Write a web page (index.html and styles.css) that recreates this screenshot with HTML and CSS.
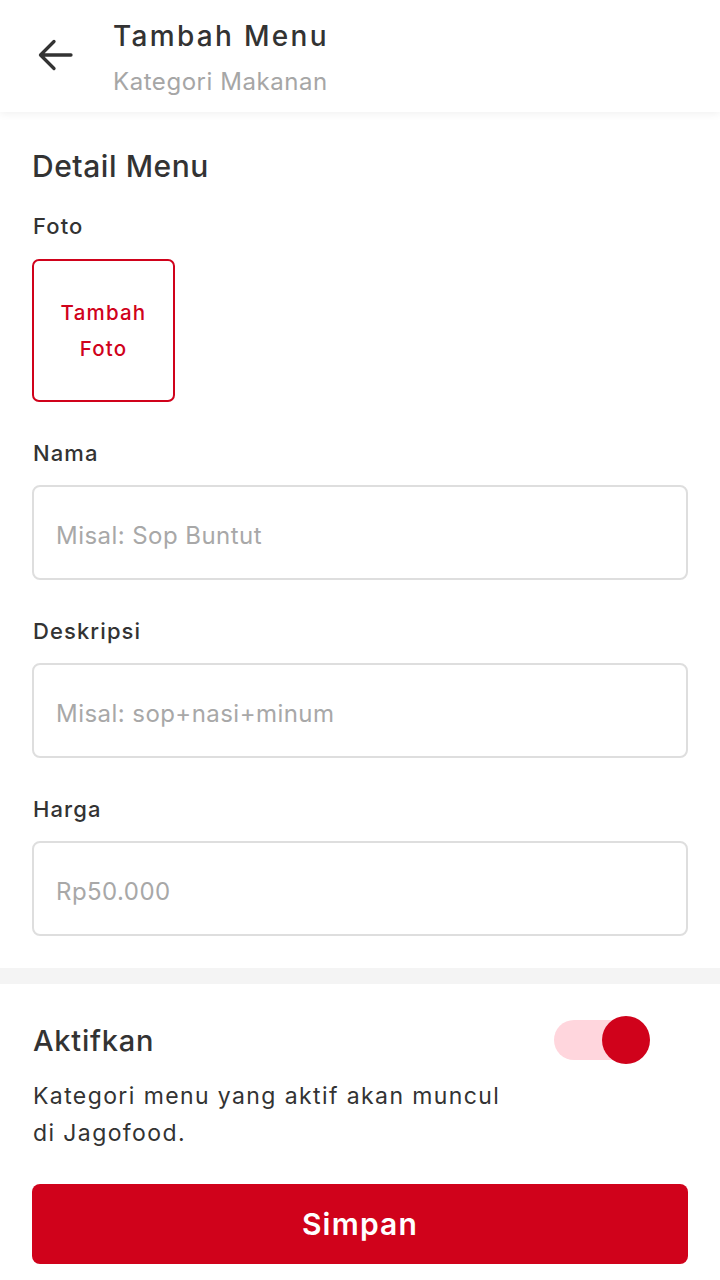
FILE: index.html
```html
<!DOCTYPE html>
<html>
<head>
<meta charset="utf-8">
<link rel="stylesheet" href="styles.css">
</head>
<body>
<div class="app">
  <header class="topbar">
    <button class="back" aria-label="Kembali">
      <svg width="36" height="34" viewBox="0 0 36 34"><path d="M33 17H3M16 3.5L2.5 17L16 30.5" fill="none" stroke="#333" stroke-width="3.3" stroke-linecap="round" stroke-linejoin="round"/></svg>
    </button>
    <div class="titles">
      <div class="title">Tambah Menu</div>
      <div class="subtitle">Kategori Makanan</div>
    </div>
  </header>

  <section class="detail">
    <h2 class="section-title">Detail Menu</h2>
    <div class="field">
      <div class="label">Foto</div>
      <div class="photo">Tambah<br>Foto</div>
    </div>
    <div class="field">
      <div class="label">Nama</div>
      <div class="input">Misal: Sop Buntut</div>
    </div>
    <div class="field">
      <div class="label">Deskripsi</div>
      <div class="input">Misal: sop+nasi+minum</div>
    </div>
    <div class="field">
      <div class="label">Harga</div>
      <div class="input">Rp50.000</div>
    </div>
  </section>

  <div class="divider"></div>

  <section class="active">
    <div class="active-row">
      <div class="active-title">Aktifkan</div>
      <div class="toggle"><div class="track"></div><div class="knob"></div></div>
    </div>
    <p class="active-desc">Kategori menu yang aktif akan muncul di Jagofood.</p>
    <button class="save">Simpan</button>
  </section>
</div>
</body>
</html>
```
FILE: styles.css
```css
* { box-sizing: border-box; }
html, body { margin: 0; padding: 0; background: #fff; }
body { font-family: Inter, "Noto Sans", sans-serif; color: #333; }
.app { width: 720px; min-height: 1280px; }

.topbar {
  height: 112px;
  display: flex;
  align-items: flex-start;
  box-shadow: 0 2px 8px rgba(0,0,0,0.06);
  position: relative;
}
.back {
  border: 0; background: none; padding: 0;
  margin: 38px 0 0 38px;
  width: 36px; height: 34px;
  display: flex;
}
.titles { margin-left: 39px; padding-top: 16px; }
.title { font-size: 28px; font-weight: 500; line-height: 40px; color: #333; letter-spacing: 2.3px; }
.subtitle { font-size: 24px; line-height: 32px; color: #a6a6a6; margin-top: 10px; letter-spacing: 0.55px; }

.detail { padding: 34px 32px 32px 32px; }
.section-title { margin: 0; font-size: 30px; font-weight: 500; line-height: 40px; color: #333; letter-spacing: 0.55px; }
.field { margin-top: 25px; }
.field + .field { margin-top: 36px; }
.label { font-size: 22px; font-weight: 500; line-height: 30px; color: #333; margin-left: 1px; letter-spacing: 1.1px; }
.photo {
  margin-top: 18px;
  width: 143px; height: 143px;
  border: 2px solid #d0021b;
  border-radius: 7px;
  display: flex; align-items: center; justify-content: center;
  text-align: center;
  color: #d0021b; font-size: 20.5px; font-weight: 500; line-height: 36px; letter-spacing: 1.2px;
}
.field + .field .input { margin-top: 17px; }
.input {
  height: 95px;
  border: 2px solid #dedede;
  border-radius: 8px;
  display: flex; align-items: center;
  padding: 6px 0 0 22px;
  font-size: 24px; color: #a8a8a8; letter-spacing: 0.45px;
}

.divider { height: 16px; background: #f4f4f4; }

.active { padding: 32px 32px 0 32px; }
.active-row { display: flex; align-items: center; justify-content: space-between; height: 48px; }
.active-title { font-size: 29px; font-weight: 500; color: #333; margin-left: 1px; letter-spacing: 0.75px; }
.toggle { position: relative; width: 96px; height: 48px; margin-right: 38px; }
.track { position: absolute; left: 0; top: 4px; width: 86px; height: 40px; border-radius: 20px; background: #ffd6dd; }
.knob { position: absolute; right: 0; top: 0; width: 48px; height: 48px; border-radius: 50%; background: #d0021b; }
.active-desc { margin: 14px 0 0 1px; width: 480px; font-size: 23px; line-height: 37px; color: #333; letter-spacing: 1.4px; }
.save {
  margin-top: 32px;
  width: 656px; height: 80px;
  border: 0; border-radius: 8px;
  background: #d0021b; color: #fff;
  font-family: inherit; font-size: 30px; font-weight: 600; letter-spacing: 1.2px;
  display: block;
}
```
